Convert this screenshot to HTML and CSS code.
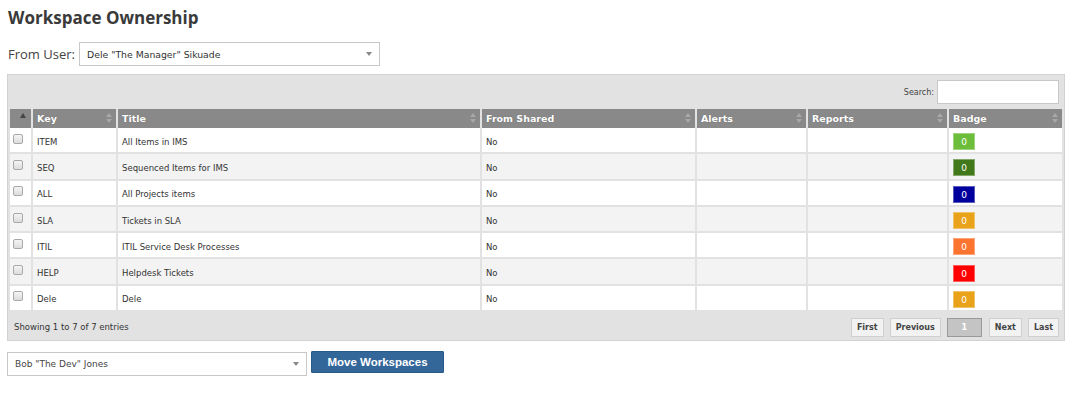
FILE: index.html
```html
<!DOCTYPE html>
<html lang="en">
  <head>
    <meta charset="UTF-8" />
    <meta name="viewport" content="width=device-width, initial-scale=1.0" />
    <title>Workspace Ownership</title>
    <link rel="stylesheet" href="styles.css">
  </head>
  <body>
    <div class="wrapper">
      <h1 class="page-title">Workspace Ownership</h1>
      <div class="from-user">
        <label>From User:</label>
        <div class="fake-select from-select">
          <span>Dele "The Manager" Sikuade</span>
          <i class="caret"></i>
        </div>
      </div>

      <div class="grid-panel">
        <div class="grid-top">
          <span>Search:</span>
          <input type="text" class="search-box" />
        </div>
        <table class="grid">
          <colgroup>
            <col class="col-check" />
            <col class="col-key" />
            <col class="col-title" />
            <col class="col-shared" />
            <col class="col-alerts" />
            <col class="col-reports" />
            <col class="col-badge" />
          </colgroup>
          <thead>
            <tr>
              <th><span class="sort-up"></span></th>
              <th>Key<span class="sort"></span></th>
              <th>Title<span class="sort"></span></th>
              <th>From Shared<span class="sort"></span></th>
              <th>Alerts<span class="sort"></span></th>
              <th>Reports<span class="sort"></span></th>
              <th>Badge<span class="sort"></span></th>
            </tr>
          </thead>
          <tbody>
            <tr>
              <td><input type="checkbox" /></td>
              <td>ITEM</td>
              <td>All Items in IMS</td>
              <td>No</td>
              <td></td>
              <td></td>
              <td><span class="badge" style="background:#6cbd3a">0</span></td>
            </tr>
            <tr>
              <td><input type="checkbox" /></td>
              <td>SEQ</td>
              <td>Sequenced Items for IMS</td>
              <td>No</td>
              <td></td>
              <td></td>
              <td><span class="badge" style="background:#417819">0</span></td>
            </tr>
            <tr>
              <td><input type="checkbox" /></td>
              <td>ALL</td>
              <td>All Projects items</td>
              <td>No</td>
              <td></td>
              <td></td>
              <td><span class="badge" style="background:#00009c">0</span></td>
            </tr>
            <tr>
              <td><input type="checkbox" /></td>
              <td>SLA</td>
              <td>Tickets in SLA</td>
              <td>No</td>
              <td></td>
              <td></td>
              <td><span class="badge" style="background:#e8a31a">0</span></td>
            </tr>
            <tr>
              <td><input type="checkbox" /></td>
              <td>ITIL</td>
              <td>ITIL Service Desk Processes</td>
              <td>No</td>
              <td></td>
              <td></td>
              <td><span class="badge" style="background:#fd7330">0</span></td>
            </tr>
            <tr>
              <td><input type="checkbox" /></td>
              <td>HELP</td>
              <td>Helpdesk Tickets</td>
              <td>No</td>
              <td></td>
              <td></td>
              <td><span class="badge" style="background:#ff0000">0</span></td>
            </tr>
            <tr>
              <td><input type="checkbox" /></td>
              <td>Dele</td>
              <td>Dele</td>
              <td>No</td>
              <td></td>
              <td></td>
              <td><span class="badge" style="background:#e8a31a">0</span></td>
            </tr>
          </tbody>
        </table>
        <div class="grid-bottom">
          <span class="info">Showing 1 to 7 of 7 entries</span>
          <div class="paging">
            <a href="javascript:void(0)" class="page-btn">First</a>
            <a href="javascript:void(0)" class="page-btn">Previous</a>
            <a href="javascript:void(0)" class="page-btn current">1</a>
            <a href="javascript:void(0)" class="page-btn">Next</a>
            <a href="javascript:void(0)" class="page-btn">Last</a>
          </div>
        </div>
      </div>

      <div class="move-row">
        <div class="fake-select to-select">
          <span>Bob "The Dev" Jones</span>
          <i class="caret"></i>
        </div>
        <a href="javascript:void(0)" class="move-btn">Move Workspaces</a>
      </div>
    </div>
  </body>
</html>
```

FILE: styles.css
```css
body {
  margin: 0;
  font-family: "DejaVu Sans", Verdana, sans-serif;
  color: #333;
  background: #fff;
}
.wrapper {
  padding: 0 15px 0 7px;
}
.page-title {
  margin: 0;
  padding: 6px 0 0 1px;
  height: 30px;
  font-family: "Open Sans", sans-serif;
  font-size: 17px;
  font-weight: 700;
  color: #3a3a3a;
}

/* from user */
.from-user {
  display: flex;
  align-items: center;
  margin-top: 6px;
  height: 24px;
}
.from-user label {
  font-family: "Open Sans", sans-serif;
  font-size: 13px;
  color: #444;
  padding-left: 1px;
  width: 71px;
}
.fake-select {
  box-sizing: border-box;
  height: 24px;
  border: 1px solid #c8c8c8;
  background: #fff;
  display: flex;
  align-items: center;
  justify-content: space-between;
  padding: 0 7px;
  font-size: 9.3px;
  color: #333;
}
.from-select {
  width: 301px;
}
.caret {
  display: block;
  width: 0;
  height: 0;
  border-left: 3.5px solid transparent;
  border-right: 3.5px solid transparent;
  border-top: 4px solid #888;
}

/* grid */
.grid-panel {
  margin-top: 8px;
  width: 1058px;
  box-sizing: border-box;
  background: #e2e2e2;
  border: 1px solid #d2d2d2;
  padding: 0 2px;
}
.grid-top {
  display: flex;
  justify-content: flex-end;
  align-items: center;
  height: 34px;
  font-size: 8px;
  color: #444;
  padding-right: 3px;
}
.search-box {
  box-sizing: border-box;
  width: 122px;
  height: 24px;
  border: 1px solid #c8c8c8;
  margin: -1px 0 0 3px;
  padding: 0;
}
.grid {
  width: 1052px;
  border-collapse: collapse;
  font-size: 8.5px;
  table-layout: fixed;
}
.grid .col-check { width: 22px; }
.grid .col-key { width: 85px; }
.grid .col-title { width: 364px; }
.grid .col-shared { width: 215px; }
.grid .col-alerts { width: 111px; }
.grid .col-reports { width: 141px; }
.grid .col-badge { width: 114px; }
.grid th {
  background: #898989;
  color: #fff;
  font-weight: bold;
  font-size: 9.5px;
  text-align: left;
  height: 19px;
  padding: 0 0 0 4px;
  border-left: 2px solid #e2e2e2;
  position: relative;
  text-shadow: 0 0 1px rgba(0, 0, 0, 0.25);
}
.grid th:first-child {
  border-left: 0;
}
.grid .sort {
  position: absolute;
  right: 4px;
  top: 4px;
  width: 0;
  height: 0;
  border-left: 3px solid transparent;
  border-right: 3px solid transparent;
  border-bottom: 4px solid #a8a8a8;
}
.grid .sort::after {
  content: "";
  position: absolute;
  left: -3px;
  top: 6px;
  border-left: 3px solid transparent;
  border-right: 3px solid transparent;
  border-top: 4px solid #a8a8a8;
}
.grid .sort-up {
  position: absolute;
  right: 5px;
  top: 4px;
  border-left: 3.5px solid transparent;
  border-right: 3.5px solid transparent;
  border-bottom: 5px solid #444;
}
.grid td {
  height: 21.3px;
  padding: 3px 0 0 4px;
  border: 2px solid #e2e2e2;
  border-top: 0;
  color: #333;
}
.grid td:first-child {
  border-left: 0;
  padding-left: 3px;
}
.grid td:last-child {
  border-right: 0;
}
.grid tbody tr:nth-child(even) td {
  background: #f3f3f3;
}
.grid tbody tr:nth-child(odd) td {
  background: #fff;
}
.grid input[type="checkbox"] {
  appearance: none;
  -webkit-appearance: none;
  box-sizing: border-box;
  width: 10px;
  height: 10px;
  margin: 0 0 6px 0;
  vertical-align: middle;
  border: 1px solid #a9a9a9;
  border-radius: 2px;
  background: linear-gradient(#f4f4f4, #dcdcdc);
}
.badge {
  display: inline-block;
  box-sizing: border-box;
  width: 22px;
  height: 17px;
  line-height: 16px;
  text-align: center;
  color: #fff;
  font-size: 9px;
  border: 1px solid rgba(255, 255, 255, 0.35);
}

.grid-bottom {
  display: flex;
  justify-content: space-between;
  align-items: center;
  height: 27px;
  padding: 1px 3px 0 4px;
}
.grid-bottom .info {
  font-size: 8.5px;
  color: #333;
}
.paging {
  display: flex;
  gap: 6px;
  margin-top: 1px;
}
.page-btn {
  box-sizing: border-box;
  height: 19px;
  line-height: 17px;
  padding: 0 5px;
  border: 1px solid #cfcfcf;
  background: #f2f2f2;
  color: #444;
  font-size: 8px;
  font-weight: bold;
  text-decoration: none;
}
.page-btn.current {
  background: #c4c4c4;
  border-color: #999;
  color: #fff;
  width: 35px;
  text-align: center;
  margin-right: 1px;
}

/* bottom */
.move-row {
  display: flex;
  align-items: flex-start;
  margin-top: 11px;
  gap: 4px;
}
.to-select {
  width: 300px;
  font-size: 9px;
  color: #444;
}
.move-btn {
  box-sizing: border-box;
  width: 133px;
  height: 22px;
  line-height: 20px;
  margin-top: -1px;
  background: #336699;
  border: 1px solid #2a5a8a;
  color: #fff;
  font-family: "Liberation Sans", Arial, sans-serif;
  font-weight: bold;
  font-size: 11.5px;
  text-align: center;
  text-decoration: none;
  border-radius: 1px;
}
```
